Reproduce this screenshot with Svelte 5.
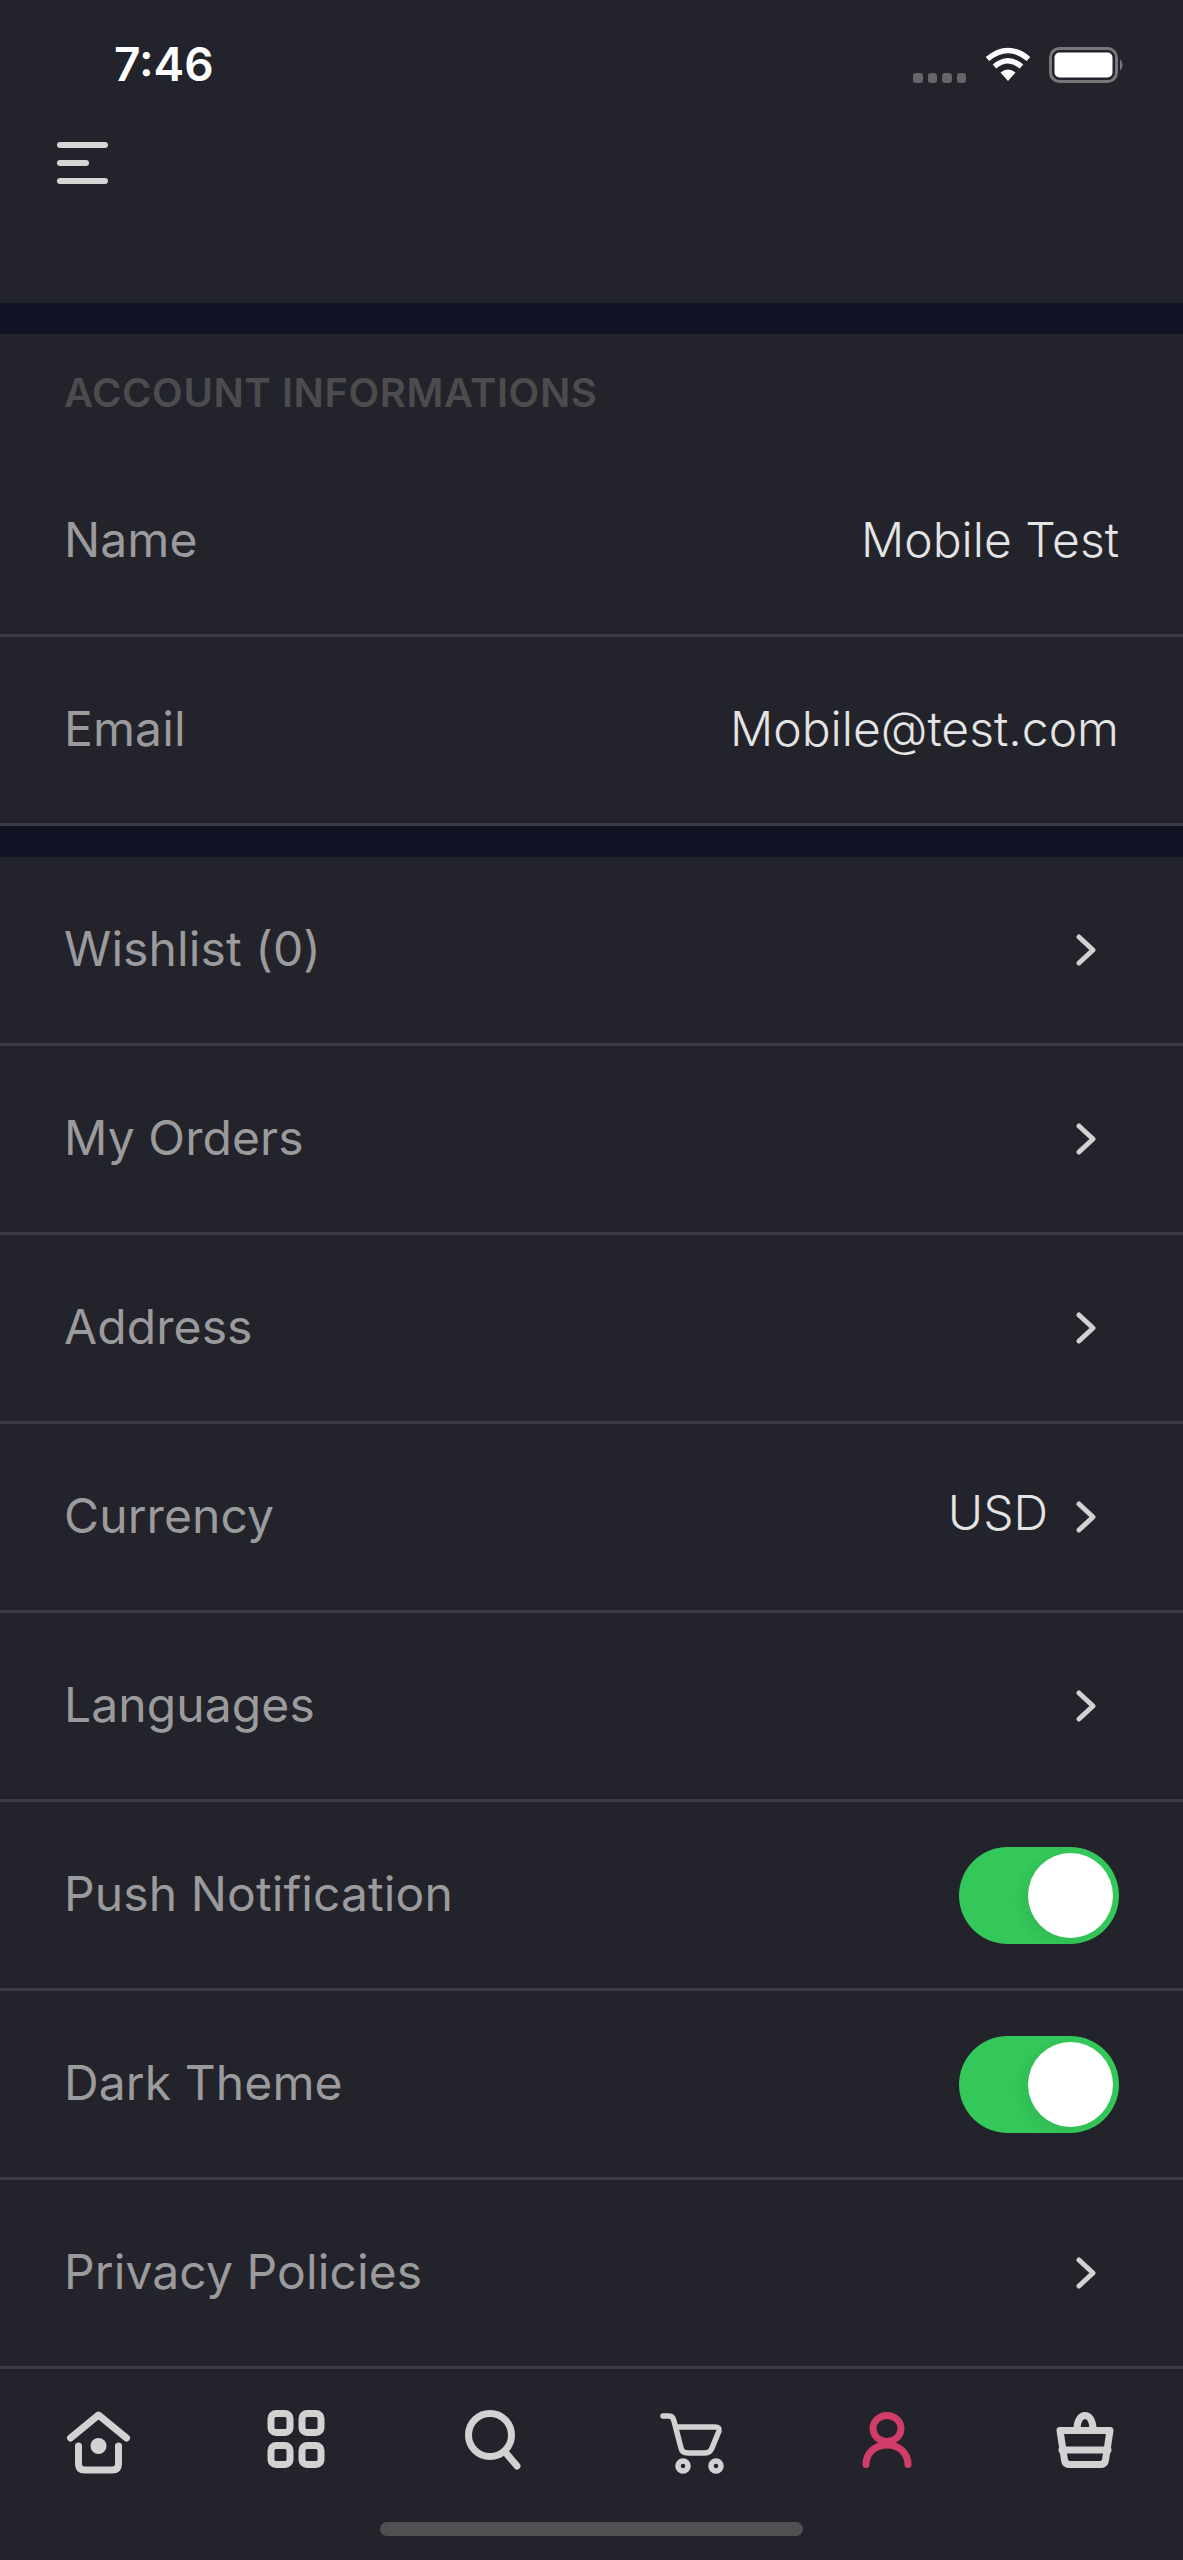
<script>
  const rows = [
    { label: 'Wishlist (0)', kind: 'link' },
    { label: 'My Orders', kind: 'link' },
    { label: 'Address', kind: 'link' },
    { label: 'Currency', kind: 'link', value: 'USD' },
    { label: 'Languages', kind: 'link' },
    { label: 'Push Notification', kind: 'toggle' },
    { label: 'Dark Theme', kind: 'toggle' },
    { label: 'Privacy Policies', kind: 'link' }
  ];
</script>

<div class="page">
  <header class="header">
    <div class="status">
      <span class="time">7:46</span>
      <div class="indicators">
        <div class="dots"><i></i><i></i><i></i><i></i></div>
        <svg class="wifi" viewBox="0 0 46 35" width="46" height="35">
          <path d="M23 34 L15.500 25.500 Q23 19.500 30.500 25.500 Z" fill="#fff"/>
          <path d="M9.500 19.500 Q23 8 36.500 19.500" fill="none" stroke="#fff" stroke-width="5.500"/>
          <path d="M2.500 12 Q23 -5 43.500 12" fill="none" stroke="#fff" stroke-width="5.500"/>
        </svg>
        <svg class="battery" viewBox="0 0 76 36" width="76" height="36">
          <rect x="1.500" y="1.500" width="66" height="33" rx="9" fill="none" stroke="#77777a" stroke-width="3"/>
          <rect x="5.500" y="5.500" width="58" height="25" rx="5" fill="#fff"/>
          <path d="M71 12 Q76 18 71 24 Z" fill="#77777a"/>
        </svg>
      </div>
    </div>
    <div class="menu"><i></i><i class="short"></i><i></i></div>
  </header>

  <div class="band"></div>

  <section>
    <h2>ACCOUNT INFORMATIONS</h2>
    <div class="row"><span class="label">Name</span><span class="value">Mobile Test</span></div>
    <div class="row"><span class="label">Email</span><span class="value">Mobile@test.com</span></div>
  </section>

  <div class="band"></div>

  <section>
    {#each rows as r}
      <div class="row">
        <span class="label">{r.label}</span>
        {#if r.kind === 'toggle'}
          <span class="switch"><span class="knob"></span></span>
        {:else}
          <span class="right">
            {#if r.value}<span class="value small">{r.value}</span>{/if}
            <svg class="chev" viewBox="0 0 20 32" width="20" height="32">
              <path d="M3 3 L17 16 L3 29" fill="none" stroke="#d2d2d2" stroke-width="5" stroke-linecap="round" stroke-linejoin="round"/>
            </svg>
          </span>
        {/if}
      </div>
    {/each}
  </section>

  <nav class="nav">
    <svg viewBox="0 0 84 84" width="84" height="84">
      <g fill="none" stroke="#d2d2d2" stroke-width="7" stroke-linecap="round" stroke-linejoin="round">
        <path d="M13.500 28 L41.500 5 L69.500 28"/>
        <path d="M21.500 36 V54 Q21.500 60 27.500 60 H55.500 Q61.500 60 61.500 54 V36"/>
      </g>
      <circle cx="41.500" cy="36" r="8" fill="#d2d2d2"/>
    </svg>
    <svg viewBox="0 0 84 84" width="84" height="84">
      <g fill="none" stroke="#d2d2d2" stroke-width="7">
        <rect x="17" y="3.500" width="19" height="19" rx="5"/>
        <rect x="48" y="3.500" width="19" height="19" rx="5"/>
        <rect x="17" y="35.500" width="19" height="19" rx="5"/>
        <rect x="48" y="35.500" width="19" height="19" rx="5"/>
      </g>
    </svg>
    <svg viewBox="0 0 84 84" width="84" height="84">
      <g fill="none" stroke="#d2d2d2" stroke-width="7" stroke-linecap="round">
        <circle cx="39" cy="25" r="21.500"/>
        <path d="M55 43 L66 56"/>
      </g>
    </svg>
    <svg viewBox="0 0 84 84" width="84" height="84">
      <g fill="none" stroke="#d2d2d2" stroke-width="5.500" stroke-linecap="round" stroke-linejoin="round">
        <path d="M15 6 H21 Q25 6 26 11 L33 38 Q34 43 40 43 H57 Q62 43 64 38 L71 21 Q72 17 67 17 H29"/>
        <circle cx="35" cy="56" r="5"/>
        <circle cx="68" cy="56" r="5"/>
      </g>
    </svg>
    <svg viewBox="0 0 84 84" width="84" height="84">
      <g fill="none" stroke="#d23c68" stroke-width="7" stroke-linecap="round">
        <ellipse cx="42" cy="18.500" rx="14" ry="13"/>
        <path d="M21 54.500 C21 43 30 35 42 35 C54 35 63 43 63 54.500"/>
      </g>
    </svg>
    <svg viewBox="0 0 84 84" width="84" height="84">
      <g fill="none" stroke="#d2d2d2" stroke-width="7" stroke-linejoin="round" stroke-linecap="round">
        <path d="M35 19 C35 1 51 1 51 19"/>
        <path d="M18 20.500 H68 L63.500 50 Q63 54.500 58 54.500 H28 Q23 54.500 22.500 50 Z"/>
        <path d="M20 40 H66"/>
      </g>
    </svg>
  </nav>
  <div class="home"><span></span></div>
</div>

<style>
  :global(body) { margin: 0; background: #22232b; }
  .page {
    width: 1183px;
    height: 2560px;
    overflow: hidden;
    background: #22232b;
    font-family: Inter, "Liberation Sans", sans-serif;
  }
  .header { height: 303px; box-sizing: border-box; }
  .status {
    display: flex;
    justify-content: space-between;
    align-items: flex-start;
    padding: 38px 58px 0 114px;
    height: 100px;
    box-sizing: border-box;
  }
  .time { font-size: 46px; line-height: 52px; font-weight: 600; color: #fff; }
  .indicators { display: flex; align-items: flex-start; padding-top: 9px; }
  .dots { display: flex; gap: 5px; margin: 26px 19px 0 0; }
  .dots i { width: 9.500px; height: 9.500px; border-radius: 3px; background: #66666a; }
  .wifi { margin-right: 18px; }
  .menu { display: flex; flex-direction: column; gap: 12px; padding: 42px 0 0 57px; }
  .menu i { display: block; width: 51px; height: 6px; border-radius: 3px; background: #d6d6d6; }
  .menu i.short { width: 32px; }
  .band { height: 31px; background: #0f1323; }
  h2 {
    margin: 0;
    height: 114px;
    box-sizing: border-box;
    padding: 34px 0 0 64px;
    font-size: 40px;
    line-height: 50px;
    font-weight: 600;
    letter-spacing: 0.55px;
    color: #4c4c4f;
  }
  .row {
    display: flex;
    align-items: center;
    justify-content: space-between;
    height: 189px;
    box-sizing: border-box;
    padding: 0 64px;
    border-bottom: 3px solid #3a3a47;
  }
  .label { font-size: 48px; letter-spacing: 0.1px; color: #9b9b9d; margin-top: -3px; }
  .value { font-size: 48px; font-weight: 300; color: #e4e4e4; margin-top: -3px; }
  .small { margin-top: -10px; }
  .right { display: flex; align-items: center; gap: 28px; padding-right: 23px; }
  .switch {
    display: flex;
    justify-content: flex-end;
    align-items: center;
    width: 160px;
    height: 97px;
    box-sizing: border-box;
    padding-right: 6px;
    border-radius: 49px;
    background: #34c759;
  }
  .knob {
    width: 85px;
    height: 85px;
    border-radius: 50%;
    background: #fff;
    box-shadow: -6px 4px 14px rgba(0,0,0,0.06);
  }
  .nav {
    display: grid;
    grid-template-columns: repeat(6, 1fr);
    justify-items: center;
    box-sizing: border-box;
    padding-top: 41px;
    height: 153px;
  }
  .nav svg { display: block; }
  .home { display: flex; justify-content: center; }
  .home span { width: 423px; height: 14px; border-radius: 7px; background: #505052; }
</style>
